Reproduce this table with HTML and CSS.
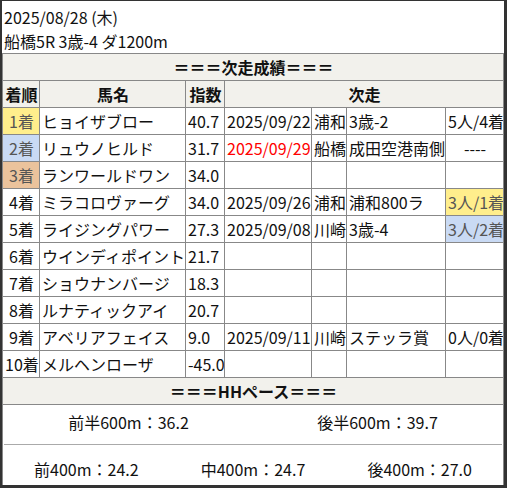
FILE: index.html
```html
<!DOCTYPE html>
<html lang="ja">
<head>
<meta charset="utf-8">
<link rel="stylesheet" href="styles.css">
</head>
<body>
<div class="frame">
  <div class="head">
    <div class="line">2025/08/28 (木)</div>
    <div class="line">船橋5R 3歳-4 ダ1200m</div>
  </div>
  <table class="grid">
    <colgroup>
      <col class="c1"><col class="c2"><col class="c3"><col class="c4"><col class="c5"><col class="c6"><col class="c7">
    </colgroup>
    <tr class="title"><td colspan="7">＝＝＝次走成績＝＝＝</td></tr>
    <tr class="hdr"><td>着順</td><td>馬名</td><td>指数</td><td colspan="4">次走</td></tr>
    <tr><td class="rank gold">1着</td><td>ヒョイザブロー</td><td>40.7</td><td>2025/09/22</td><td>浦和</td><td>3歳-2</td><td>5人/4着</td></tr>
    <tr><td class="rank blue">2着</td><td>リュウノヒルド</td><td>31.7</td><td class="red">2025/09/29</td><td>船橋</td><td>成田空港南側</td><td class="center">----</td></tr>
    <tr><td class="rank tan">3着</td><td>ランワールドワン</td><td>34.0</td><td></td><td></td><td></td><td></td></tr>
    <tr><td class="rank">4着</td><td>ミラコロヴァーグ</td><td>34.0</td><td>2025/09/26</td><td>浦和</td><td>浦和800ラ</td><td class="gold">3人/1着</td></tr>
    <tr><td class="rank">5着</td><td>ライジングパワー</td><td>27.3</td><td>2025/09/08</td><td>川崎</td><td>3歳-4</td><td class="blue">3人/2着</td></tr>
    <tr><td class="rank">6着</td><td>ウインディポイント</td><td>21.7</td><td></td><td></td><td></td><td></td></tr>
    <tr><td class="rank">7着</td><td>ショウナンバージ</td><td>18.3</td><td></td><td></td><td></td><td></td></tr>
    <tr><td class="rank">8着</td><td>ルナティックアイ</td><td>20.7</td><td></td><td></td><td></td><td></td></tr>
    <tr><td class="rank">9着</td><td>アベリアフェイス</td><td>9.0</td><td>2025/09/11</td><td>川崎</td><td>ステッラ賞</td><td>0人/0着</td></tr>
    <tr><td class="rank">10着</td><td>メルヘンローザ</td><td>-45.0</td><td></td><td></td><td></td><td></td></tr>
    <tr class="title"><td colspan="7">＝＝＝HHペース＝＝＝</td></tr>
  </table>
  <div class="pace">
    <div class="half">
      <span>前半600m：36.2</span>
      <span>後半600m：39.7</span>
    </div>
    <div class="thirds">
      <span>前400m：24.2</span>
      <span>中400m：24.7</span>
      <span>後400m：27.0</span>
    </div>
  </div>
</div>
</body>
</html>
```
FILE: styles.css
```css
html, body {
  margin: 0;
  padding: 0;
  background: #333;
}
body {
  font-family: "Noto Sans CJK JP", "Noto Sans", sans-serif;
  font-size: 16px;
  color: #111;
}
.frame {
  width: 502px;
  height: 484px;
  margin: 1px 0 0 2px;
  background: #fff;
  overflow: hidden;
}
.head {
  padding: 4px 0 0 2px;
  height: 48px;
}
.head .line {
  line-height: 24px;
  height: 24px;
}
.grid {
  border-collapse: collapse;
  table-layout: fixed;
  width: 502px;
}
.grid td {
  border: 1px solid #888;
  padding: 1px 1px 1px 2px;
  line-height: 24px;
  height: 24px;
  white-space: nowrap;
  overflow: hidden;
}
.c1 { width: 37px; }
.c2 { width: 146px; }
.c3 { width: 39px; }
.c4 { width: 87px; }
.c5 { width: 35px; }
.c6 { width: 99px; }
.c7 { width: 58px; }
.title td, .hdr td {
  background: #f2f1ec;
  font-weight: bold;
  text-align: center;
}
.rank { text-align: center; }
.center { text-align: center; }
.gold { background: #ffee8c; color: #555; }
.blue { background: #c9daf4; color: #555; }
.tan { background: #ebc39c; color: #555; }
.red { color: #ff0000; }
.pace {
  border-left: 1px solid #888;
  border-right: 1px solid #888;
  height: 80px;
}
.half {
  display: grid;
  grid-template-columns: 1fr 1fr;
  justify-items: center;
  line-height: 24px;
  padding: 5px 0 10px;
  border-bottom: 1px solid #aaa;
  margin: 0 1px;
}
.thirds {
  display: grid;
  grid-template-columns: 1fr 1fr 1fr;
  justify-items: center;
  line-height: 24px;
  padding: 12px 0 0;
}
```
